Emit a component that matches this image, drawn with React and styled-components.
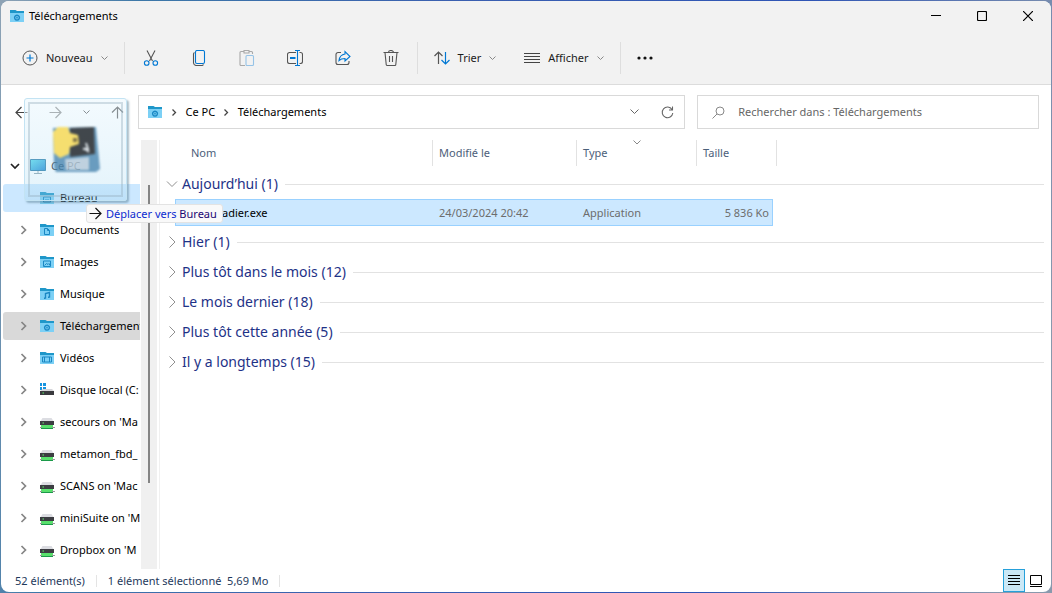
import styled, { createGlobalStyle } from 'styled-components'

const GlobalStyle = createGlobalStyle`
  * {
    box-sizing: border-box;
  }

  body {
    margin: 0;
    padding: 1px;
    min-height: 100vh;
    font-family: 'Noto Sans', 'Open Sans', sans-serif;
    font-size: 11px;
    line-height: 16px;
    color: #000;
    background: linear-gradient(100deg, #8ea3b5 0%, #3d78a8 12%, #3a5fb0 40%, #2f55b5 70%, #8899ad 96%);
  }

  button, input {
    font: inherit;
    color: inherit;
  }
`

const Window = styled.div`
  position: relative;
  display: flex;
  flex-direction: column;
  height: calc(100vh - 2px);
  border-radius: 8px;
  background: #fff;
  overflow: hidden;
`

const TitleBar = styled.header`
  display: flex;
  align-items: center;
  height: 31px;
  padding: 0 0 2px 9px;
  background: #f2f2f2;
`

const Title = styled.h1`
  flex: 1;
  margin: 0 0 0 4px;
  font-size: 11px;
  font-weight: 400;
`

const CaptionButton = styled.button`
  display: flex;
  justify-content: center;
  align-items: center;
  width: 46px;
  height: 28px;
  padding: 0;
  border: 0;
  background: none;
`

const Toolbar = styled.div`
  display: flex;
  align-items: center;
  height: 53px;
  padding-left: 7px;
  background: #f2f2f2;
  border-bottom: 1px solid #dcdcdc;
  color: #1b1b1b;
`

const ToolGroup = styled.div`
  display: flex;
  gap: 12px;
  padding: 0 6px;
`

const ToolButton = styled.button`
  display: flex;
  align-items: center;
  gap: 8px;
  height: 32px;
  padding: 0 8px;
  border: 0;
  background: none;
`

const IconButton = styled.button`
  display: flex;
  justify-content: center;
  align-items: center;
  width: 48px;
  height: 32px;
  padding: 0;
  border: 0;
  background: none;
`

const Divider = styled.div`
  width: 1px;
  height: 32px;
  margin: 0 2px;
  background: #dedede;
`

const NavRow = styled.div`
  display: grid;
  grid-template-columns: 137px minmax(0, 18fr) minmax(0, 11fr);
  align-items: center;
  padding: 10px 12px 11px 0;
`

const NavButtons = styled.div`
  display: flex;
  align-items: center;
  justify-content: space-between;
  padding: 0 14px;
`

const PlainButton = styled.button`
  display: flex;
  padding: 0;
  border: 0;
  background: none;
`

const AddressBar = styled.div`
  display: flex;
  align-items: center;
  height: 34px;
  margin-right: 12px;
  padding: 0 10px 0 9px;
  border: 1px solid #d9d9d9;
`

const Crumbs = styled.nav`
  flex: 1;
  display: flex;
  align-items: center;
  gap: 9px;
`

const Crumb = styled.a`
  color: #000;
  text-decoration: none;
`

const AddressActions = styled.div`
  display: flex;
  align-items: center;
  gap: 22px;
`

const SearchBox = styled.label`
  display: flex;
  align-items: center;
  gap: 12px;
  height: 34px;
  padding: 0 13px;
  border: 1px solid #d9d9d9;
`

const SearchInput = styled.input`
  flex: 1;
  min-width: 0;
  padding: 0;
  border: 0;
  outline: 0;
  background: none;

  &::placeholder {
    color: #666;
    opacity: 1;
  }
`

const Body = styled.div`
  flex: 1;
  display: flex;
  min-height: 0;
`

const Sidebar = styled.nav`
  flex: none;
  width: 139px;
  overflow: hidden;
`

const Tree = styled.ul`
  margin: 0;
  padding: 10px 0 0 2px;
  list-style: none;
`

const TreeItem = styled.li`
  display: flex;
  align-items: center;
  gap: ${({ $root }) => ($root ? '10px' : '12px')};
  height: 28px;
  margin: 2px 0 4px;
  padding-left: ${({ $root }) => ($root ? '7px' : '15px')};
  border-radius: 3px 0 0 3px;
  background: ${({ $state }) =>
    $state === 'drop' ? '#cce8ff' : $state === 'current' ? '#d9d9d9' : 'transparent'};
  overflow: hidden;

  svg {
    flex: none;
  }
`

const TreeLink = styled.a`
  flex: none;
  display: flex;
  align-items: center;
  gap: 5px;
  color: #000;
  text-decoration: none;
  white-space: nowrap;
`

const ScrollTrack = styled.div`
  flex: none;
  width: 17px;
  padding: 45px 7px 86px;
  border-left: 1px solid #fff;
  background: #f0f0f0;
`

const ScrollThumb = styled.div`
  height: 100%;
  background: #858585;
`

const Files = styled.main`
  flex: 1;
  min-width: 0;
  margin-left: 2px;
  padding-right: 7px;
  border-left: 1px solid #f0f0f0;
`

const FileTable = styled.table`
  width: 100%;
  table-layout: fixed;
  border-spacing: 0;
`

const HeadCell = styled.th`
  position: relative;
  height: 26px;
  padding: 0 0 0 ${({ $first }) => ($first ? '31px' : '6px')};
  border-right: ${({ $last }) => ($last ? '0' : '1px solid #e2e2e2')};
  color: #4c607a;
  font-weight: 400;
  text-align: left;
`

const SortMark = styled.span`
  position: absolute;
  top: 0;
  left: 50%;
  display: flex;
  margin-left: -4px;
`

const GroupCell = styled.th`
  height: ${({ $open }) => ($open ? '33px' : '30px')};
  padding: ${({ $open }) => ($open ? '3px' : '0')} 0 0;
  font-weight: 400;
`

const GroupRow = styled.div`
  display: flex;
  align-items: center;
  gap: 7px;
`

const GroupButton = styled.button`
  display: flex;
  align-items: center;
  gap: 4px;
  padding: 0 0 0 6px;
  border: 0;
  color: #1e3287;
  font-size: 14px;
  line-height: 20px;
  background: none;
`

const GroupLine = styled.div`
  flex: 1;
  height: 1px;
  background: #e2e2e2;
`

const FileCell = styled.td`
  padding: 0 ${({ $end }) => ($end ? '4px' : '0')} 1px ${({ $start }) => ($start ? '15px' : '0')};
  color: ${({ $start }) => ($start ? '#000' : '#6d6d6d')};
  text-align: ${({ $end }) => ($end ? 'right' : 'left')};
`

const FileFill = styled.div`
  height: 27px;
  padding: 5px ${({ $end }) => ($end ? '3px' : '6px')} 0 ${({ $start }) => ($start ? '46px' : '6px')};
  border: solid #99d1ff;
  border-width: 1px ${({ $end }) => ($end ? '1px' : '0')} 1px ${({ $start }) => ($start ? '1px' : '0')};
  background: #cce8ff;
`

const StatusBar = styled.footer`
  display: flex;
  align-items: center;
  height: 23px;
  padding: 0 4px 0 14px;
  color: #1e395b;
`

const StatusDivider = styled.div`
  width: 1px;
  height: 12px;
  margin: 0 11px;
  background: #e4e4e4;
`

const ViewButtons = styled.div`
  display: flex;
  margin-left: auto;
`

const ViewButton = styled.button`
  display: flex;
  justify-content: center;
  align-items: center;
  width: 22px;
  height: 23px;
  padding: 0;
  border: 1px solid ${({ $on }) => ($on ? '#26a0da' : 'transparent')};
  background: ${({ $on }) => ($on ? '#cbe8f6' : 'none')};
`

const DragGhost = styled.div`
  position: absolute;
  top: 97px;
  left: 23px;
  display: flex;
  justify-content: center;
  align-items: center;
  width: 103px;
  height: 103px;
  border: 1px solid #c3e3f3;
  border-radius: 3px;
  background: linear-gradient(rgba(232, 246, 253, 0.5), rgba(190, 228, 246, 0.36) 75%, rgba(150, 205, 232, 0.25));
  box-shadow: 2px 2px 2px rgba(90, 130, 150, 0.5);
  pointer-events: none;

  &::before {
    content: '';
    position: absolute;
    inset: 3px;
    border: 2px solid rgba(150, 175, 190, 0.4);
  }
`

const GhostArt = styled.svg`
  opacity: 0.8;
  filter: blur(1px);
`

const DropTip = styled.div`
  position: absolute;
  top: 203px;
  left: 85px;
  display: flex;
  align-items: center;
  gap: 4px;
  height: 19px;
  padding: 0 5px 0 2px;
  border: 1px solid #e3e3e3;
  border-radius: 3px;
  color: #0b2bd0;
  white-space: nowrap;
  background: #f9f9f9;
`

const DropTarget = styled.span`
  color: #1a0672;
`

function Chevron({ dir = 'down', w = 8, color = '#888', stroke = 1 }) {
  const h = w / 2
  const down = dir === 'down'
  return (
    <svg width={down ? w : h + 1} height={down ? h + 1 : w} fill='none' stroke={color} strokeWidth={stroke}>
      <path d={down ? `M.5 .5L${h} ${h}L${w - 0.5} .5` : `M.5 .5L${h} ${h}L.5 ${w - 0.5}`} />
    </svg>
  )
}

// Chevron of a tree row, in a box of fixed width so that the icons line up
function TreeChevron({ open }) {
  return (
    <svg width='10' height='10' fill='none' stroke={open ? '#222' : '#858585'} strokeWidth='1.7'>
      <path d={open ? 'M1 3l4 4 4-4' : 'M3.5 1l4 4-4 4'} />
    </svg>
  )
}

const folderMarks = {
  desktop: <path d='M4.5 7h7v5h-7zM6 10h4' />,
  document: <path d='M5.5 6.5h3l2 2v4h-5zM8.500 6.500v2h2' />,
  picture: <path d='M4.5 7h7v5.500h-7zM5.500 11.500l2-2 1.500 1 1-1 1 2' />,
  music: <path d='M6.500 12.500v-5l4-1v5M5 12.200h1.500M9 11.200h1.500' strokeWidth='1.400' />,
  download: <path d='M8 7.200a2.400 2.400 0 1 0 .01 0M8 8.800v1.600' strokeWidth='1.400' />,
  video: <path d='M3.500 7h9v5h-9zM5.500 7v5M10.500 7v5' />
}

function FolderIcon({ mark = 'download' }) {
  return (
    <svg width='15' height='14' viewBox='1 1 15 14' fill='none' stroke='#1a88c4' strokeWidth='1'>
      <path d='M1 3.500V2h5.500l1.500 1h7v3H1z' fill='#1f97c9' stroke='none' />
      <path d='M1 5h14v9H1z' fill='#7cd0f5' stroke='none' />
      {folderMarks[mark]}
    </svg>
  )
}

function MonitorIcon() {
  return (
    <svg width='16' height='16'>
      <defs>
        <linearGradient id='screen' x2='1' y2='1'>
          <stop offset='0' stopColor='#3fd6e8' />
          <stop offset='1' stopColor='#0878cc' />
        </linearGradient>
      </defs>
      <path d='M.5 1.500h15v11H.5z' fill='url(#screen)' stroke='#0f6c9e' />
      <path d='M8 13v2M4 15.500h8' stroke='#7f98a5' />
    </svg>
  )
}

function DiskIcon() {
  return (
    <svg width='15' height='14' viewBox='1 0 15 14'>
      <path d='M0 0h3v3H0zM4 0h3v3H4zM0 4h3v3H0zM4 4h3v3H4z' fill='#1794e0' />
      <path d='M4 6h9l2 2H1z' fill='#d5d5d9' />
      <path d='M1 8h14v4H1z' fill='#3a3a3e' />
      <path d='M3.500 9.500H5v1H3.500z' fill='#5df06c' />
    </svg>
  )
}

function NetworkDriveIcon() {
  return (
    <svg width='15' height='14' viewBox='0 0 15 14'>
      <path d='M2.500 3h9L14 7H0z' fill='#dcdde2' />
      <path d='M0 6h14v4H0z' fill='#3c3d42' />
      <path d='M2.500 7.500H4v1H2.500z' fill='#63f073' />
      <path d='M1 10h12v4H1z' fill='#58e06c' />
      <path d='M0 12.500h2M12 12.500h3' stroke='#999' />
      <path d='M1 13.500h12' stroke='#1b9a49' />
    </svg>
  )
}

function ArrowIcon({ dir, color = '#6b6b6b' }) {
  const turn = { right: 0, left: 180, up: 270 }[dir]
  return (
    <svg width='13' height='13' fill='none' stroke={color} strokeWidth='1.200'>
      <path d='M.5 6.500h11.500M6.500 1l5.500 5.500L6.500 12' transform={`rotate(${turn} 6.500 6.500)`} />
    </svg>
  )
}

const toolIcons = [
  ['Couper', (
    <>
      <path d='M4 .5l5.500 10.500M12 .5L6.500 11' stroke='#555' />
      <path d='M6 13a2.300 2.300 0 1 1-4.600 0A2.300 2.300 0 0 1 6 13zM14.600 13a2.300 2.300 0 1 1-4.600 0 2.300 2.300 0 0 1 4.600 0z' />
    </>
  )],
  ['Copier', (
    <>
      <path d='M3.500 2.500a2 2 0 0 0-1 2v8.500a3 3 0 0 0 3 2.500h5a2 2 0 0 0 2-1' stroke='#555' />
      <rect x='4.500' y='.5' width='9' height='13' rx='1.500' />
    </>
  )],
  ['Coller', (
    <g opacity='.38'>
      <path d='M5 1.500H2a1 1 0 0 0-1 1v12a1 1 0 0 0 1 1h4M10 1.500h2.500a1 1 0 0 1 1 1V4M5 .5h5v2.500H5z' stroke='#333' />
      <rect x='7' y='5.500' width='7.500' height='10' rx='1' />
    </g>
  )],
  ['Renommer', (
    <>
      <path d='M9 2.500H2.500a2 2 0 0 0-2 2v7a2 2 0 0 0 2 2H9M12.500 2.500h1a2 2 0 0 1 2 2v7a2 2 0 0 1-2 2h-1' stroke='#555' />
      <path d='M8 .5h5M8 15.500h5M10.500 .5v15' />
      <path d='M3 8h5.500' strokeWidth='2' />
    </>
  )],
  ['Partager', (
    <>
      <path d='M6 2.500H3a2 2 0 0 0-2 2v8a2 2 0 0 0 2 2h9a2 2 0 0 0 2-2V11' stroke='#555' />
      <path d='M4 10.500c.5-4 2.500-6 6-6.500V1.500l5 5-5 4.500V8.500c-2.500 0-4.500.5-6 2z' />
    </>
  )],
  ['Supprimer', (
    <path d='M.5 2.500h15M5.500 2.500a2.500 2 0 0 1 5 0M2 2.500l1.200 12a1 1 0 0 0 1 1h7.600a1 1 0 0 0 1-1l1.200-12M6.500 6v6M9.500 6v6' stroke='#555' />
  )]
]

const tree = [
  { name: 'Bureau', icon: <FolderIcon mark='desktop' />, state: 'drop' },
  { name: 'Documents', icon: <FolderIcon mark='document' /> },
  { name: 'Images', icon: <FolderIcon mark='picture' /> },
  { name: 'Musique', icon: <FolderIcon mark='music' /> },
  { name: 'Téléchargements', icon: <FolderIcon />, state: 'current' },
  { name: 'Vidéos', icon: <FolderIcon mark='video' /> },
  { name: 'Disque local (C:', icon: <DiskIcon /> },
  { name: "secours on 'Ma", icon: <NetworkDriveIcon /> },
  { name: 'metamon_fbd_', icon: <NetworkDriveIcon /> },
  { name: "SCANS on 'Mac", icon: <NetworkDriveIcon /> },
  { name: "miniSuite on 'M", icon: <NetworkDriveIcon /> },
  { name: "Dropbox on 'M", icon: <NetworkDriveIcon /> }
]

const groups = [
  { name: 'Aujourd’hui', count: 1, open: true },
  { name: 'Hier', count: 1 },
  { name: 'Plus tôt dans le mois', count: 12 },
  { name: 'Le mois dernier', count: 18 },
  { name: 'Plus tôt cette année', count: 5 },
  { name: 'Il y a longtemps', count: 15 }
]

function Group({ name, count, open }) {
  return (
    <tr>
      <GroupCell colSpan={5} $open={open}>
        <GroupRow>
          <GroupButton aria-expanded={!!open}>
            <svg width='12' height='14' fill='none' stroke='#909090'>
              <path d={open ? 'M1 4.500l5 5 5-5' : 'M3.500 1.500L9 7l-5.500 5.500'} />
            </svg>
            {name} ({count})
          </GroupButton>
          <GroupLine />
        </GroupRow>
      </GroupCell>
    </tr>
  )
}

function App() {
  return (
    <>
      <GlobalStyle />
      <Window>
        <TitleBar>
          <FolderIcon />
          <Title>Téléchargements</Title>
          <CaptionButton aria-label='Réduire'>
            <svg width='10' height='10'><path d='M0 4.500h10' stroke='#000' /></svg>
          </CaptionButton>
          <CaptionButton aria-label='Agrandir'>
            <svg width='10' height='10'>
              <rect x='.5' y='.5' width='9' height='9' rx='1' fill='none' stroke='#000' strokeWidth='1.200' />
            </svg>
          </CaptionButton>
          <CaptionButton aria-label='Fermer'>
            <svg width='10' height='10'><path d='M0 0l10 10M10 0L0 10' stroke='#000' strokeWidth='1.200' /></svg>
          </CaptionButton>
        </TitleBar>

        <Toolbar>
          <ToolGroup>
            <ToolButton>
              <svg width='16' height='16' fill='none'>
                <circle cx='8' cy='8' r='7' stroke='#555' />
                <path d='M8 4.500v7M4.500 8h7' stroke='#0078d4' strokeWidth='1.200' />
              </svg>
              Nouveau
              <Chevron w={7} />
            </ToolButton>
          </ToolGroup>
          <Divider />
          {toolIcons.map(([label, drawing]) => (
            <IconButton key={label} aria-label={label}>
              <svg width='16' height='16' viewBox='0 0 16 16' fill='none' stroke='#0078d4' strokeWidth='1.100'>
                {drawing}
              </svg>
            </IconButton>
          ))}
          <Divider />
          <ToolGroup>
            <ToolButton>
              <svg width='16' height='14' fill='none' strokeWidth='1.200'>
                <path d='M4.500 13V1M.5 5l4-4 4 4' stroke='#555' />
                <path d='M11.500 1v12M7.500 9l4 4 4-4' stroke='#0078d4' />
              </svg>
              Trier
              <Chevron w={7} />
            </ToolButton>
            <ToolButton>
              <svg width='16' height='10'>
                <path d='M0 .5h16M0 3.500h16M0 6.500h16M0 9.500h16' stroke='#444' />
              </svg>
              Afficher
              <Chevron w={7} />
            </ToolButton>
          </ToolGroup>
          <Divider />
          <ToolGroup>
            <ToolButton aria-label='Plus d’options'>
              <svg width='16' height='4' fill='#111'>
                <circle cx='2' cy='2' r='1.600' />
                <circle cx='8' cy='2' r='1.600' />
                <circle cx='14' cy='2' r='1.600' />
              </svg>
            </ToolButton>
          </ToolGroup>
        </Toolbar>

        <NavRow>
          <NavButtons>
            <PlainButton aria-label='Précédent'><ArrowIcon dir='left' color='#444' /></PlainButton>
            <PlainButton aria-label='Suivant'><ArrowIcon dir='right' color='#777' /></PlainButton>
            <PlainButton aria-label='Emplacements récents'><Chevron w={7} color='#333' /></PlainButton>
            <PlainButton aria-label='Dossier parent'><ArrowIcon dir='up' color='#333' /></PlainButton>
          </NavButtons>
          <AddressBar>
            <Crumbs aria-label='Adresse'>
              <FolderIcon />
              <Chevron dir='right' w={7} color='#444' stroke={1.3} />
              <Crumb href='#pc'>Ce PC</Crumb>
              <Chevron dir='right' w={7} color='#444' stroke={1.3} />
              <Crumb href='#telechargements'>Téléchargements</Crumb>
            </Crumbs>
            <AddressActions>
              <PlainButton aria-label='Adresses précédentes'><Chevron w={9} color='#666' /></PlainButton>
              <PlainButton aria-label='Actualiser'>
                <svg width='13' height='13' fill='none' stroke='#666' strokeWidth='1.100'>
                  <path d='M11 3.500A5.300 5.300 0 1 0 11.800 7M11.500 .5v3.500H8' />
                </svg>
              </PlainButton>
            </AddressActions>
          </AddressBar>
          <SearchBox>
            <svg width='15' height='13' fill='none' stroke='#888'>
              <circle cx='9' cy='5' r='4' />
              <path d='M6 8l-4.500 4.500' />
            </svg>
            <SearchInput type='text' aria-label='Rechercher' placeholder='Rechercher dans : Téléchargements' />
          </SearchBox>
        </NavRow>

        <Body>
          <Sidebar aria-label='Dossiers'>
            <Tree>
              <TreeItem $root>
                <TreeChevron open />
                <TreeLink href='#pc'><MonitorIcon />Ce PC</TreeLink>
              </TreeItem>
              {tree.map(({ name, icon, state }) => (
                <TreeItem key={name} $state={state}>
                  {state === 'drop' ? <svg width='10' height='10' /> : <TreeChevron />}
                  <TreeLink href={`#${name}`}>{icon}{name}</TreeLink>
                </TreeItem>
              ))}
            </Tree>
          </Sidebar>
          <ScrollTrack><ScrollThumb /></ScrollTrack>
          <Files>
            <FileTable>
              <colgroup>
                <col style={{ width: 273 }} />
                <col style={{ width: 144 }} />
                <col style={{ width: 120 }} />
                <col style={{ width: 80 }} />
                <col />
              </colgroup>
              <thead>
                <tr>
                  <HeadCell $first>Nom</HeadCell>
                  <HeadCell>Modifié le</HeadCell>
                  <HeadCell>
                    Type
                    <SortMark><Chevron /></SortMark>
                  </HeadCell>
                  <HeadCell>Taille</HeadCell>
                  <HeadCell as='td' $last />
                </tr>
              </thead>
              <tbody>
                <Group {...groups[0]} />
                <tr>
                  <FileCell $start><FileFill $start>adier.exe</FileFill></FileCell>
                  <FileCell><FileFill>24/03/2024 20:42</FileFill></FileCell>
                  <FileCell><FileFill>Application</FileFill></FileCell>
                  <FileCell $end><FileFill $end>5 836 Ko</FileFill></FileCell>
                  <td />
                </tr>
                {groups.slice(1).map(group => <Group key={group.name} {...group} />)}
              </tbody>
            </FileTable>
          </Files>
        </Body>

        <StatusBar>
          <span>52 élément(s)</span>
          <StatusDivider />
          <span>1 élément sélectionné&nbsp; 5,69 Mo</span>
          <StatusDivider />
          <ViewButtons>
            <ViewButton $on aria-label='Détails'>
              <svg width='12' height='11'>
                <path d='M0 .5h12M0 3.500h12M0 6.500h12M0 9.500h12' stroke='#000' />
              </svg>
            </ViewButton>
            <ViewButton aria-label='Grandes icônes'>
              <svg width='12' height='12' fill='none' stroke='#000'>
                <path d='M.5 .5h11v9H.5zM0 11.500h12' />
              </svg>
            </ViewButton>
          </ViewButtons>
        </StatusBar>

        <DragGhost>
          <GhostArt width='52' height='52' viewBox='0 0 52 52'>
            <path d='M3 4l43-1 4 42-4 3H6l-2-4z' fill='#4a86b0' />
            <path d='M20 4l24-1 1 27-25 3z' fill='#171b20' />
            <path d='M3 8l5-5h10l2 6 8 2 1 9-9 3-1 7-9 4-6-5z' fill='#f8d84c' />
            <path d='M23 14h4v4h-4z' fill='#6b5a1d' />
            <path d='M36 19l2 6h-5M34 24l5 4' stroke='#d8dde2' strokeWidth='2' fill='none' />
            <path d='M15 35l24-2v13H16z' fill='#cfdae4' fillOpacity='.8' />
          </GhostArt>
        </DragGhost>
        <DropTip role='tooltip'>
          <ArrowIcon dir='right' color='#111' />
          <span>Déplacer vers <DropTarget>Bureau</DropTarget></span>
        </DropTip>
      </Window>
    </>
  )
}

export default App
